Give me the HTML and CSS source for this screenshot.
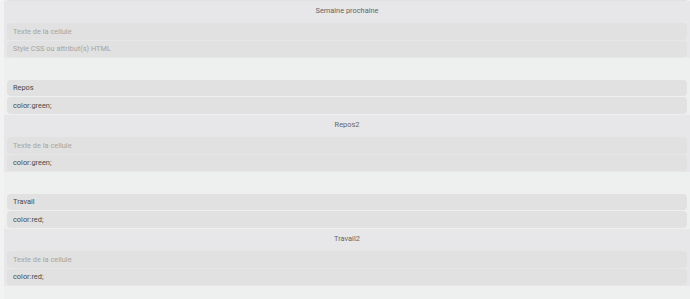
FILE: index.html
```html
<!DOCTYPE html>
<html lang="fr">
<head>
<meta charset="utf-8">
<title>Planning</title>
<link rel="stylesheet" href="styles.css">
</head>
<body>
<div class="table">
  <div class="row light tail-row"><div class="tail"></div></div>
  <div class="row dark">
    <div class="title">Semaine prochaine</div>
    <input class="field" type="text" placeholder="Texte de la cellule">
    <input class="field" type="text" placeholder="Style CSS ou attribut(s) HTML">
  </div>
  <div class="row light">
    <div class="title"></div>
    <input class="field" type="text" value="Repos">
    <input class="field" type="text" value="color:green;">
  </div>
  <div class="row dark">
    <div class="title">Repos2</div>
    <input class="field" type="text" placeholder="Texte de la cellule">
    <input class="field" type="text" value="color:green;">
  </div>
  <div class="row light">
    <div class="title"></div>
    <input class="field" type="text" value="Travail">
    <input class="field" type="text" value="color:red;">
  </div>
  <div class="row dark">
    <div class="title">Travail2</div>
    <input class="field" type="text" placeholder="Texte de la cellule">
    <input class="field" type="text" value="color:red;">
  </div>
  <div class="row light end"></div>
</div>
</body>
</html>
```
FILE: styles.css
```css
html, body {
  margin: 0;
  padding: 0;
  background: #f2f2f2;
  font-family: Roboto, "Liberation Sans", sans-serif;
  font-size: 7.4px;
  overflow: hidden;
}
.table {
  margin-left: 4px;
  width: 686px;
  display: flex;
  flex-direction: column;
}
.row {
  display: flex;
  flex-direction: column;
  padding: 0 3px;
  height: 57px;
  box-sizing: border-box;
}
.row.dark { background: #e7e7e9; }
.row.light { background: #eeefef; }
.row.tail-row { height: 1px; }
.row.end { height: 20px; }
.tail {
  height: 1px;
  background: #e0e1e0;
  border-radius: 0 0 3px 3px;
}
.title {
  height: 19px;
  line-height: 19px;
  margin-bottom: 3px;
  text-align: center;
  color: #666666;
  font-size: 7.4px;
}
.field {
  display: block;
  box-sizing: border-box;
  width: 100%;
  height: 17px;
  margin: 0 0 1px 0;
  padding: 0 6px;
  border: none;
  outline: none;
  border-radius: 4px;
  background: #e0e1e0;
  font-family: Roboto, "Liberation Sans", sans-serif;
  font-size: 7.4px;
  color: #4a4a4a;
}
.field::placeholder {
  color: #a5a5a5;
  opacity: 1;
}
```
